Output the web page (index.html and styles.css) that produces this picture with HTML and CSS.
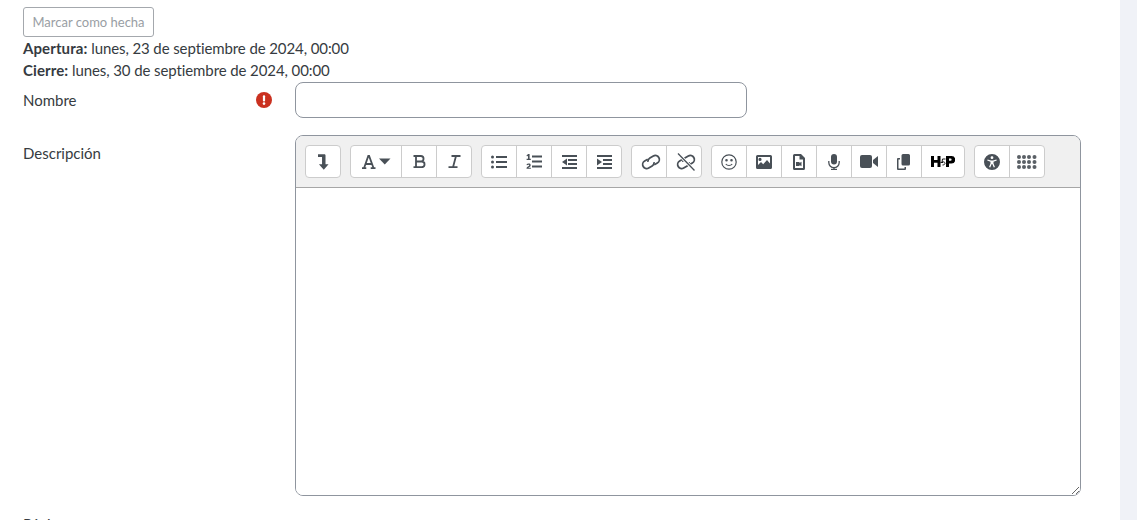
FILE: index.html
```html
<!DOCTYPE html>
<html lang="es">
<head>
<meta charset="utf-8">
<title>Página</title>
<link rel="stylesheet" href="styles.css">
</head>
<body>
<div class="shell">
<main class="content">
  <button class="done" type="button">Marcar como hecha</button>
  <div class="dates">
    <div><strong>Apertura:</strong> lunes, 23 de septiembre de 2024, 00:00</div>
    <div><strong>Cierre:</strong> lunes, 30 de septiembre de 2024, 00:00</div>
  </div>
  <form class="form">
    <div class="row row-name">
      <div class="label-cell">
        <label for="nombre">Nombre</label>
        <svg class="required" viewBox="0 0 16 16" width="16" height="16"><circle cx="8" cy="8" r="8" fill="#ca3120"/><rect x="6.900" y="3.200" width="2.200" height="6.200" rx="1" fill="#fff"/><circle cx="8" cy="11.600" r="1.300" fill="#fff"/></svg>
      </div>
      <input id="nombre" class="text-input" type="text">
    </div>
    <div class="row row-desc">
      <div class="label-cell label-top"><label for="desc">Descripción</label></div>
      <div class="editor">
        <div class="toolbar">
          <div class="group">
            <button class="tool" type="button"><svg viewBox="0 0 12 17" width="11" height="16" class="ic"><path d="M0 0h6.800c.9 0 1.400.5 1.400 1.400V11h3.300L6.300 17 1 11h3.400V3H0z"/></svg></button>
          </div>
          <div class="group">
            <button class="tool tool-wide" type="button"><svg viewBox="0 0 15 14" width="15" height="14" class="ic-line mid"><path d="M1 13.200h4.300M9.700 13.200h4.800M3 13.200 7.300 1h.8l4.500 12.200M4.500 9h6"/></svg><svg viewBox="0 0 12 7" width="12" height="7" class="ic"><path d="M0 .5h11.500L5.750 6.500z"/></svg></button>
            <button class="tool" type="button"><svg viewBox="0 0 13 13" width="13" height="13" class="ic-line mid"><path d="M.5 1h7.300a2.700 2.700 0 0 1 0 5.500H3M3 6.500h5.700a2.800 2.800 0 0 1 0 5.700H.5M3 1v11.200"/></svg></button>
            <button class="tool" type="button"><svg viewBox="0 0 13 13" width="13" height="13" class="ic-line mid"><path d="M3.500 1H12.500M.5 12.200h9M8 1 5 12.200"/></svg></button>
          </div>
          <div class="group">
            <button class="tool" type="button"><svg viewBox="0 0 16 14" width="16" height="14" class="ic"><circle cx="1.500" cy="2" r="1.500"/><circle cx="1.500" cy="7" r="1.500"/><circle cx="1.500" cy="12" r="1.500"/><rect x="5" y="1" width="11" height="2"/><rect x="5" y="6" width="11" height="2"/><rect x="5" y="11" width="11" height="2"/></svg></button>
            <button class="tool" type="button"><svg viewBox="0 0 16 15" width="16" height="15" class="ic"><path d="M.5 1.200 2.300 0h1.300v4.800h1.200V6H.6V4.800H2V1.800l-1 .6zM.5 14.800c0-2.300 2.700-2.500 2.700-3.500 0-.7-1.300-.6-2.300 0l-.3-1.200c1.400-.8 4.100-.8 4.100 1.100 0 1.500-1.800 2-2.300 2.500h2.500v1.100z"/><rect x="6" y="1.500" width="10" height="2"/><rect x="6" y="6.500" width="10" height="2"/><rect x="6" y="11.500" width="10" height="2"/></svg></button>
            <button class="tool" type="button"><svg viewBox="0 0 15 14" width="15" height="14" class="ic"><rect x="0" y="0" width="15" height="2"/><rect x="6" y="4" width="9" height="2"/><rect x="6" y="8" width="9" height="2"/><rect x="0" y="12" width="15" height="2"/><path d="M5 3.500v7L0 7z"/></svg></button>
            <button class="tool" type="button"><svg viewBox="0 0 15 14" width="15" height="14" class="ic"><rect x="0" y="0" width="15" height="2"/><rect x="6" y="4" width="9" height="2"/><rect x="6" y="8" width="9" height="2"/><rect x="0" y="12" width="15" height="2"/><path d="M0 3.500v7L5 7z"/></svg></button>
          </div>
          <div class="group">
            <button class="tool tool-link" type="button"><svg viewBox="0 0 22 18" width="22" height="18" class="ic-line"><g transform="rotate(-30 11 9)"><path d="M9.500 5H6a4 4 0 0 0 0 8h4a4 4 0 0 0 3.600-2.300"/><path d="M12.500 13H16a4 4 0 0 0 0-8h-4a4 4 0 0 0-3.600 2.300"/></g></svg></button>
            <button class="tool tool-link" type="button"><svg viewBox="0 0 22 18" width="22" height="18" class="ic-line"><g transform="rotate(-30 11 9)"><path d="M9.500 5H6a4 4 0 0 0 0 8h4a4 4 0 0 0 3.600-2.300"/><path d="M12.500 13H16a4 4 0 0 0 0-8h-4a4 4 0 0 0-3.600 2.300"/></g><path d="M3 .5 19.500 17.500" stroke="#fff" stroke-width="3.200"/><path d="M3 .5 19.500 17.500" stroke-width="1.300"/></svg></button>
          </div>
          <div class="group">
            <button class="tool" type="button"><svg viewBox="0 0 16 16" width="16" height="16" class="ic-line thin"><circle cx="8" cy="8" r="7.200"/><circle cx="5.500" cy="6.300" r=".7"/><circle cx="10.500" cy="6.300" r=".7"/><path d="M4.800 10c1.600 2 4.800 2 6.400 0"/></svg></button>
            <button class="tool" type="button"><svg viewBox="0 0 16 14" width="16" height="14" class="ic"><path fill-rule="evenodd" d="M1.500 0h13A1.500 1.500 0 0 1 16 1.500v11a1.500 1.500 0 0 1-1.500 1.500h-13A1.500 1.500 0 0 1 0 12.500v-11A1.500 1.500 0 0 1 1.500 0zM2 2v8l3-3 2.200 2.200L11 5l3 3.500V2zm2 .8a1.600 1.600 0 1 1 0 3.200 1.600 1.600 0 0 1 0-3.200z"/></svg></button>
            <button class="tool" type="button"><svg viewBox="0 0 12 16" width="12" height="16" class="ic"><path fill-rule="evenodd" d="M1.500 0H8l4 4v10.500a1.500 1.500 0 0 1-1.500 1.500h-9A1.500 1.500 0 0 1 0 14.500v-13A1.500 1.500 0 0 1 1.500 0zM2 2v12h8V5.500H6.500V2zm1 6h3.500v1l2-1.200v4.400l-2-1.200v1H3z"/></svg></button>
            <button class="tool" type="button"><svg viewBox="0 0 12 16" width="12" height="16" class="ic"><rect x="3" y="0" width="6" height="10.500" rx="3"/><path d="M.8 7v1.500a5.200 5.200 0 0 0 10.400 0V7" fill="none" stroke="#495057" stroke-width="1.300"/><rect x="5.300" y="13" width="1.400" height="2"/><rect x="3" y="14.800" width="6" height="1.200"/></svg></button>
            <button class="tool" type="button"><svg viewBox="0 0 18 13" width="18" height="13" class="ic"><rect x="0" y="0" width="12" height="13" rx="2"/><path d="M13 5l5-4v11l-5-4z"/></svg></button>
            <button class="tool" type="button"><svg viewBox="0 0 16 16" width="16" height="16" class="ic"><path d="M7 0h5.500A1.500 1.500 0 0 1 14 1.500V10a1.500 1.500 0 0 1-1.500 1.500H7A1.500 1.500 0 0 1 5.500 10V1.500A1.500 1.500 0 0 1 7 0z"/><path d="M4 4v1.500H2.500v9h6V13H10v2a1 1 0 0 1-1 1H2a1 1 0 0 1-1-1V5a1 1 0 0 1 1-1z"/></svg></button>
            <button class="tool tool-h5p" type="button"><svg viewBox="0 0 24 11" width="24" height="11"><path d="M0 0h3v4h3.500V0h3v11h-3V6.800H3V11H0zM15 0h5.500a3.600 3.600 0 0 1 0 7.400H18V11h-3zm3 2.600v2.200h1.500a1.100 1.100 0 0 0 0-2.200z"/><path d="M9.500 6.500h2.500M14.500 3h-3l-.5 3c2-.5 3 .3 3 1.300 0 1-1 1.700-2.500 1.700" stroke="#000" fill="none" stroke-width=".9"/></svg></button>
          </div>
          <div class="group">
            <button class="tool" type="button"><svg viewBox="0 0 16 16" width="16" height="16" class="ic"><path fill-rule="evenodd" d="M8 0a8 8 0 1 1 0 16A8 8 0 0 1 8 0zm0 2.300a1.400 1.400 0 1 0 0 2.800 1.400 1.400 0 0 0 0-2.800zM3.600 5.400l-.4 1.100 3.300 1.200v1.800L5.100 13l1.100.5L7.700 10h.6l1.500 3.500 1.100-.5-1.400-3.500V7.700l3.300-1.200-.4-1.100L9 6.400H7z"/></svg></button>
            <button class="tool" type="button"><svg viewBox="0 0 20 14" width="20" height="14" class="ic gray"><circle cx="2" cy="2" r="2"/><circle cx="7" cy="2" r="2"/><circle cx="12" cy="2" r="2"/><circle cx="17.500" cy="2" r="2"/><circle cx="2" cy="7" r="2"/><circle cx="7" cy="7" r="2"/><circle cx="12" cy="7" r="2"/><circle cx="17.500" cy="7" r="2"/><circle cx="2" cy="12" r="2"/><circle cx="7" cy="12" r="2"/><circle cx="12" cy="12" r="2"/><circle cx="17.500" cy="12" r="2"/></svg></button>
          </div>
        </div>
        <textarea id="desc" class="editor-body"></textarea>
      </div>
    </div>
    <div class="row">
      <div class="label-cell"><label>Página</label></div>
    </div>
  </form>
</main>
<div class="gutter"></div>
</div>
</body>
</html>
```
FILE: styles.css
```css
* { box-sizing: border-box; }
html, body { margin: 0; height: 520px; overflow: hidden; background: #fff; }
body {
  font-family: Lato, "Open Sans", sans-serif; font-size: 15px; line-height: 22.500px;
  color: #363b41;
}
.shell { display: flex; height: 520px; }
.content { flex: 1; min-width: 0; padding: 7px 39px 0 23px; }
.gutter { width: 17px; background: #f0f2f7; }

.done {
  display: block; width: 131px; height: 30px; padding: 0;
  font: 13px/28px Lato, sans-serif; color: #999ea4;
  background: #fff; border: 1px solid #a4a8ad; border-radius: 3px;
}
.dates { letter-spacing: -.1px; }
.dates > div { height: 22px; }
.dates strong { letter-spacing: .1px; }

.row { display: grid; grid-template-columns: 272px 1fr; }
.row-name { margin-top: 1px; }
.row-desc { margin-top: 17px; }
.row-desc + .row { margin-top: 17px; }
.label-cell { display: flex; align-items: center; justify-content: space-between; padding-right: 23px; }
.label-top { align-items: flex-start; padding-top: 7px; }
.required { flex: none; }
.text-input {
  display: block; width: 452px; height: 36px; padding: 0 12px;
  border: 1px solid #8f959e; border-radius: 8px; background: #fff; font: inherit;
}
.editor {
  display: flex; flex-direction: column; width: 786px; height: 361px;
  border: 1px solid #8f959e; border-radius: 8px; overflow: hidden;
}
.toolbar {
  flex: none; display: flex; gap: 9px; height: 52px; padding: 9px 9px 0;
  background: #f0f0f0; border-bottom: 1px solid #a6a6a6;
}
.group {
  display: flex; height: 33px; background: #fff;
  border: 1px solid #cccccc; border-radius: 4px;
}
.tool {
  display: flex; align-items: center; justify-content: center; gap: 3px;
  width: 35px; height: 31px; padding: 0; background: none; border: 0;
  border-left: 1px solid #cccccc; color: #495057;
}
.tool:first-child { border-left: 0; width: 34px; }
.tool-wide, .tool-wide:first-child { width: 50px; }
.tool-link { padding-left: 3px; }
.tool-h5p { width: 43px; }
.ic { fill: #495057; }
.ic.gray { fill: #5a6066; }
.ic-line { fill: none; stroke: #495057; stroke-width: 1.800; }
.ic-line.mid { stroke-width: 1.800; }
.ic-line.thin { stroke-width: 1.200; }
.editor-body {
  display: block; flex: 1; width: 100%; min-height: 0; margin: 0; padding: 0;
  border: 0; outline: 0; resize: vertical; background: #fff;
}
```
